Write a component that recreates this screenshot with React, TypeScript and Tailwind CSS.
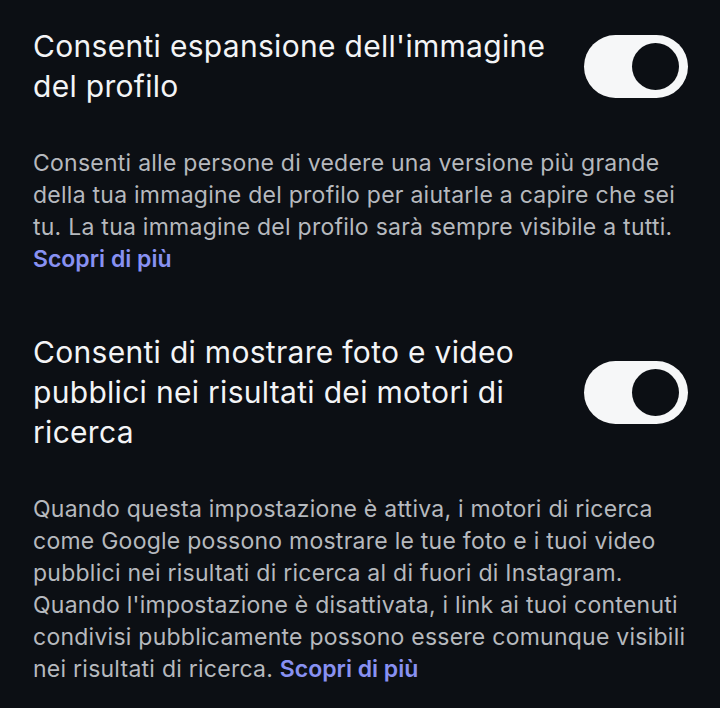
import React from "react";

function Toggle() {
  return (
    <div className="flex h-[63px] w-[104px] shrink-0 items-center justify-end rounded-full bg-[#f6f7f8] pr-[9px]">
      <div className="h-[47px] w-[47px] rounded-full bg-[#0c0f14]" />
    </div>
  );
}

function Setting({
  title,
  body,
  linkInline,
}: {
  title: string;
  body: string;
  linkInline: boolean;
}) {
  return (
    <section>
      <div className="flex items-center justify-between gap-[30px]">
        <h2 className="max-w-[540px] text-[30px] leading-[40px] tracking-[0.3px] text-[#f3f4f6]">{title}</h2>
        <Toggle />
      </div>
      <p className="mt-[41px] text-[23px] leading-[32px] tracking-[0.25px] text-[#b6b9be]">
        {body}
        {linkInline ? " " : <br />}
        <a className="font-semibold tracking-normal text-[#8891f2]">Scopri di più</a>
      </p>
    </section>
  );
}

export default function App() {
  return (
    <div
      className="min-h-[708px] w-[720px] bg-[#0c0f14] pl-[33px] pr-[32px] pt-[26px]"
      style={{ fontFamily: "Inter, Roboto, 'Noto Sans', sans-serif" }}
    >
      <Setting
        title="Consenti espansione dell'immagine del profilo"
        body="Consenti alle persone di vedere una versione più grande della tua immagine del profilo per aiutarle a capire che sei tu. La tua immagine del profilo sarà sempre visibile a tutti."
        linkInline={false}
      />
      <div className="h-[57px]" />
      <Setting
        title="Consenti di mostrare foto e video pubblici nei risultati dei motori di ricerca"
        body="Quando questa impostazione è attiva, i motori di ricerca come Google possono mostrare le tue foto e i tuoi video pubblici nei risultati di ricerca al di fuori di Instagram. Quando l'impostazione è disattivata, i link ai tuoi contenuti condivisi pubblicamente possono essere comunque visibili nei risultati di ricerca."
        linkInline={true}
      />
    </div>
  );
}
